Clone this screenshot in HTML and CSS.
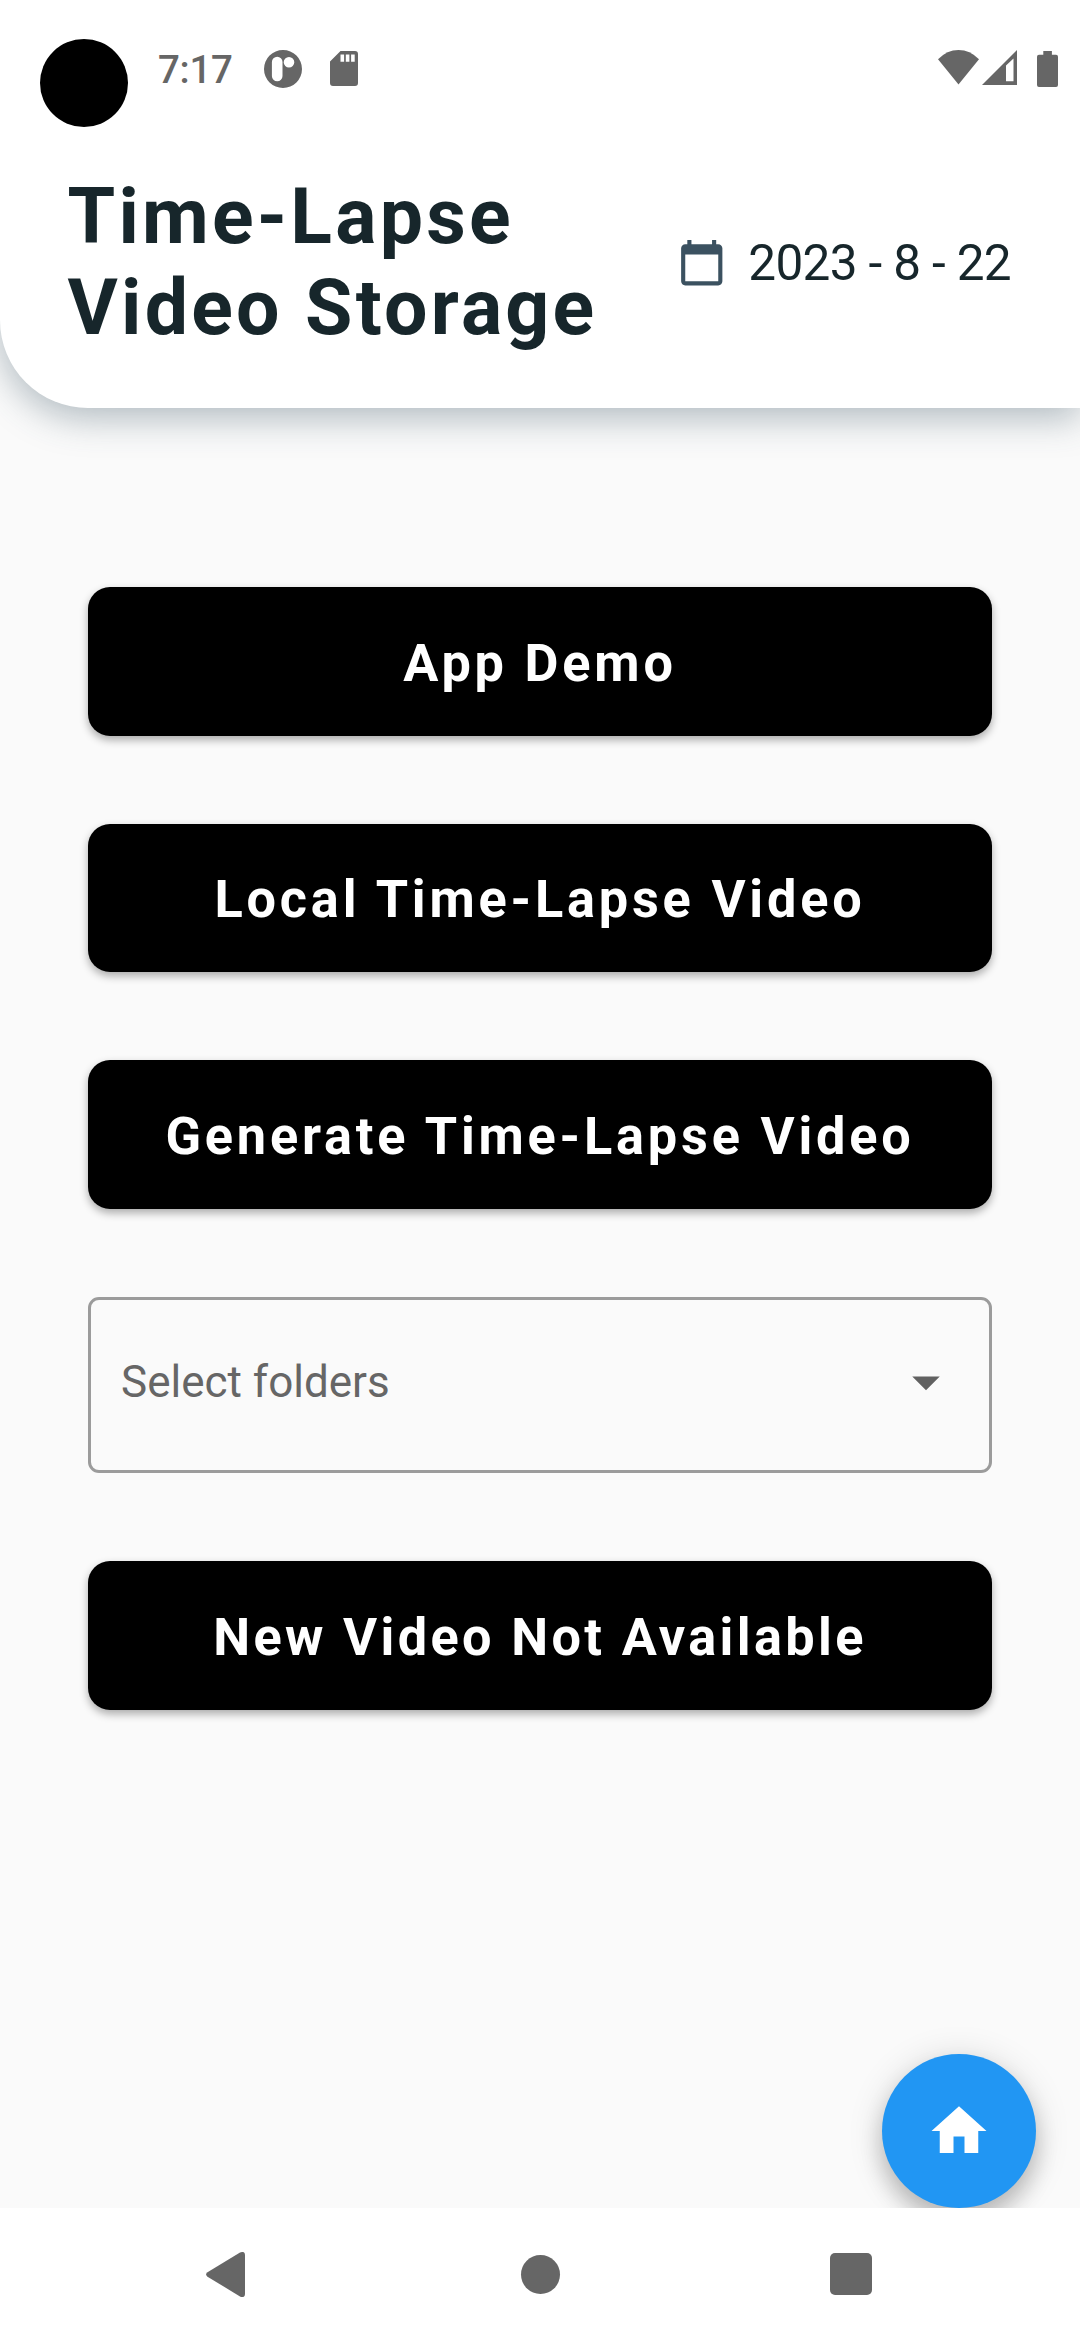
FILE: index.html
```html
<!DOCTYPE html>
<html lang="en">
<head>
<meta charset="utf-8">
<title>Time-Lapse Video Storage</title>
<link rel="stylesheet" href="styles.css">
</head>
<body>
<div class="screen">
  <header class="header">
    <div class="status">
      <span class="camera"></span>
      <span class="clock">7:17</span>
      <svg class="status-app" viewBox="0 0 38 38"><path fill-rule="evenodd" d="M19 0a19 19 0 1 1 0 38a19 19 0 0 1 0-38zM13.2 6.7a5.3 5.3 0 0 0-5.3 5.3v14a5.3 5.3 0 0 0 10.6 0V12a5.3 5.3 0 0 0-5.3-5.3zM25 6.9a5.3 5.3 0 1 0 0 10.6a5.3 5.3 0 0 0 0-10.6z"/></svg>
      <svg class="status-sd" viewBox="0 0 28 35"><path fill-rule="evenodd" d="M10.5 0H25a3 3 0 0 1 3 3v29a3 3 0 0 1-3 3H3a3 3 0 0 1-3-3V10.5zM10.5 3.5v7.3h3.6V3.5zM15.8 3.5v7.3h3.6V3.5zM21.1 3.5v7.3h3.6V3.5z"/></svg>
      <svg class="status-wifi" viewBox="0 0 41 35"><path d="M0 9.3Q9 0 20.5 0T41 9.3L20.5 34.5z"/></svg>
      <svg class="status-signal" viewBox="0 0 35 35"><path fill-rule="evenodd" d="M35 0v35H0zM24 15.5V31.3h7.5V8.5z"/></svg>
      <svg class="status-battery" viewBox="0 0 21 36"><path d="M6.3 0h8.6v3.7H19a2 2 0 0 1 2 2V34a2 2 0 0 1-2 2H2a2 2 0 0 1-2-2V5.700a2 2 0 0 1 2-2h4.300z"/></svg>
    </div>
    <div class="heading">
      <h1 class="title">Time-Lapse<br>Video Storage</h1>
      <div class="date">
        <svg class="date-icon" viewBox="0 0 24 24"><path d="M20 3h-1V1h-2v2H7V1H5v2H4c-1.100 0-2 .9-2 2v16c0 1.100.9 2 2 2h16c1.100 0 2-.9 2-2V5c0-1.100-.9-2-2-2zm0 18H4V8h16v13z"/></svg>
        <span>2023 - 8 - 22</span>
      </div>
    </div>
  </header>
  <main class="content">
    <button class="action">App Demo</button>
    <button class="action">Local Time-Lapse Video</button>
    <button class="action">Generate Time-Lapse Video</button>
    <div class="select">
      <span>Select folders</span>
      <svg class="select-arrow" viewBox="0 0 24 24"><path d="M7 10l5 5 5-5z"/></svg>
    </div>
    <button class="action action-status">New Video Not Available</button>
    <button class="fab" aria-label="Home">
      <svg class="fab-icon" viewBox="0 0 24 24"><path d="M10 20v-6h4v6h5v-8h3L12 3 2 12h3v8z"/></svg>
    </button>
  </main>
  <nav class="navbar">
    <svg class="nav-back" viewBox="0 0 39 45"><path d="M1.500 20.300L34 .6Q39-1.500 39 3V42Q39 46.500 34 44.400L1.500 24.700Q-1.300 22.500 1.500 20.300z"/></svg>
    <span class="nav-home"></span>
    <span class="nav-recent"></span>
  </nav>
</div>
</body>
</html>
```

FILE: styles.css
```css
* { box-sizing: border-box; }

body {
  margin: 0;
  background: #fafafa;
  font-family: Roboto, sans-serif;
}

svg { display: block; flex: none; }

.screen {
  display: flex;
  flex-direction: column;
  width: 1080px;
  height: 2340px;
  overflow: hidden;
  background: #fafafa;
}

.header {
  flex: none;
  height: 408px;
  background: #fff;
  border-bottom-left-radius: 88px;
  box-shadow: 0 10px 36px rgba(56, 82, 98, 0.38);
}

.status {
  display: flex;
  align-items: center;
  height: 137px;
  padding: 0 22px 0 40px;
  fill: #666;
  color: #666;
}

.camera {
  width: 88px;
  height: 88px;
  margin-top: 29px;
  border-radius: 50%;
  background: #000;
}

.clock {
  width: 106px;
  margin-left: 30px;
  padding-top: 2px;
  font-size: 38.5px;
  font-weight: 500;
  line-height: 46px;
  letter-spacing: -0.3px;
}

.status-app { width: 38px; height: 38px; }
.status-sd { width: 28px; height: 35px; margin-left: 28px; }
.status-wifi { width: 41px; height: 35px; margin: 0 0 2px auto; }
.status-signal { width: 35px; height: 35px; margin: 0 0 2px 3px; }
.status-battery { width: 21px; height: 36px; margin-left: 20px; }

.heading {
  display: flex;
  justify-content: space-between;
  align-items: center;
  padding: 35px 69px 0 67.5px;
  color: #17262b;
}

.title {
  margin: 0;
  font-size: 77px;
  font-weight: 700;
  line-height: 91px;
  letter-spacing: 3.23px;
}

.date {
  display: flex;
  align-items: center;
  gap: 22px;
  font-size: 49.5px;
  line-height: 58px;
  letter-spacing: -0.65px;
}

.date-icon { width: 49.5px; height: 49.5px; fill: #3b5160; }

.content {
  flex: 1;
  display: flex;
  flex-direction: column;
  gap: 88.2px;
  padding: 179px 88px 0;
}

.action {
  flex: none;
  height: 148.5px;
  padding: 5px 0 0;
  border: 0;
  border-radius: 22px;
  background: #000;
  color: #fff;
  font: 700 52.25px/62px Roboto, sans-serif;
  letter-spacing: 3.8px;
  box-shadow: 0 4px 8px rgba(0, 0, 0, 0.32);
}

.action-status { letter-spacing: 3.35px; }

.select {
  flex: none;
  display: flex;
  justify-content: space-between;
  align-items: center;
  height: 176px;
  padding: 0 30px 6px;
  border: 3px solid #9b9b9b;
  border-radius: 11px;
  color: #666;
  font-size: 44px;
}

.select-arrow { width: 66px; height: 66px; fill: #616161; }

.fab {
  flex: none;
  display: grid;
  place-items: center;
  align-self: flex-end;
  width: 154px;
  height: 154px;
  margin: auto -44px 0 0;
  padding: 0;
  border: 0;
  border-radius: 50%;
  background: #2196f3;
  box-shadow: 0 14px 22px rgba(0, 0, 0, 0.2), 0 4px 36px rgba(0, 0, 0, 0.14);
}

.fab-icon { width: 66px; height: 66px; fill: #fff; }

.navbar {
  position: relative;
  flex: none;
  display: flex;
  align-items: center;
  height: 132px;
  padding: 0 208.5px 0 206px;
  background: #fff;
  fill: #666;
}

.nav-back { width: 39px; height: 45px; }
.nav-home { width: 39px; height: 39px; margin-left: 276px; border-radius: 50%; background: #666; }
.nav-recent { width: 42px; height: 42px; margin-left: auto; border-radius: 5px; background: #666; }
```
